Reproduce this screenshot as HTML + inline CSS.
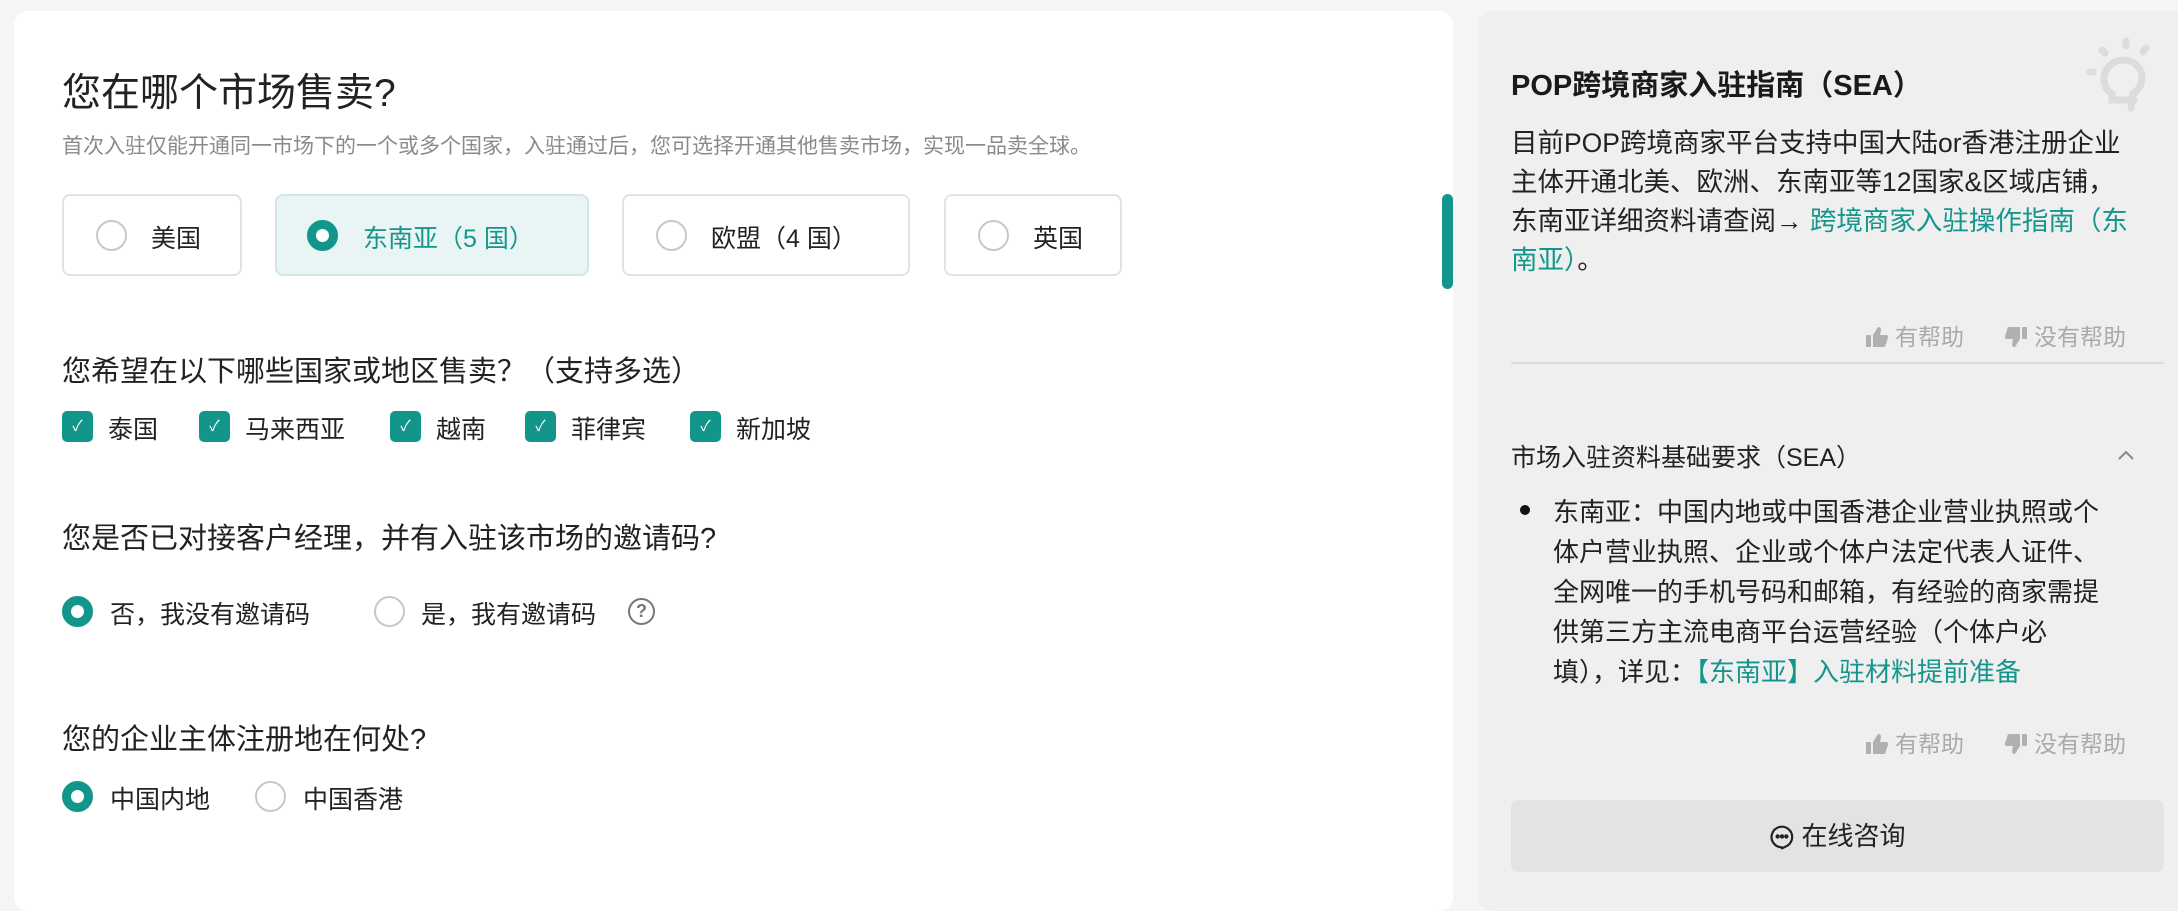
<!DOCTYPE html>
<html><head><meta charset="utf-8"><style>
*{margin:0;padding:0;box-sizing:border-box}
body{width:2178px;height:882px;background:#f5f5f5;font-family:"Liberation Sans","Noto Sans CJK SC",sans-serif;color:#222;position:relative;overflow:hidden}
.a{position:absolute;white-space:nowrap}
.card{position:absolute;left:14px;top:11px;width:1439px;height:900px;background:#fff;border-radius:14px}
.side{position:absolute;left:1478px;top:11px;width:720px;height:900px;background:#efefef;border-radius:14px}
.opt{position:absolute;top:194px;height:82px;border:2px solid #e3e3e3;border-radius:8px;background:#fff}
.opt.sel{background:#e9f5f4;border-color:#cfe6e3}
.r{position:absolute;width:31px;height:31px;border-radius:50%;border:2px solid #c8c8c8;background:#fff}
.r.on{border:9px solid #12968b}
.cb{position:absolute;width:31px;height:31px;border-radius:5px;background:#12968b;color:#fff;font-size:15px;text-align:center;line-height:31px}
.t25{font-size:25px}
.q{font-size:29px}
.g{color:#aaa;font-size:23px}
.g svg{vertical-align:-4px;margin-right:6px}
.teal{color:#14968c}
</style></head><body>
<div class="card"></div>
<div class="side"></div>

<div class="a" style="left:62px;top:62px;font-size:39px">您在哪个市场售卖?</div>
<div class="a" style="left:62px;top:130px;font-size:21px;color:#8a8a8a">首次入驻仅能开通同一市场下的一个或多个国家，入驻通过后，您可选择开通其他售卖市场，实现一品卖全球。</div>

<div class="opt" style="left:62px;width:180px"></div>
<div class="r" style="left:96px;top:220px"></div><div class="a t25" style="left:151px;top:219px">美国</div>
<div class="opt sel" style="left:275px;width:314px"></div>
<div class="r on" style="left:307px;top:220px"></div><div class="a t25 teal" style="left:363px;top:219px">东南亚（5 国）</div>
<div class="opt" style="left:622px;width:288px"></div>
<div class="r" style="left:656px;top:220px"></div><div class="a t25" style="left:711px;top:219px">欧盟（4 国）</div>
<div class="opt" style="left:944px;width:178px"></div>
<div class="r" style="left:978px;top:220px"></div><div class="a t25" style="left:1033px;top:219px">英国</div>

<div class="a" style="left:1442px;top:194px;width:11px;height:95px;background:#12968b;border-radius:6px"></div>

<div class="a q" style="left:62px;top:348px">您希望在以下哪些国家或地区售卖？（支持多选）</div>
<div class="cb" style="left:62px;top:411px">✓</div><div class="a t25" style="left:108px;top:410px">泰国</div>
<div class="cb" style="left:199px;top:411px">✓</div><div class="a t25" style="left:245px;top:410px">马来西亚</div>
<div class="cb" style="left:390px;top:411px">✓</div><div class="a t25" style="left:436px;top:410px">越南</div>
<div class="cb" style="left:525px;top:411px">✓</div><div class="a t25" style="left:571px;top:410px">菲律宾</div>
<div class="cb" style="left:690px;top:411px">✓</div><div class="a t25" style="left:736px;top:410px">新加坡</div>

<div class="a q" style="left:62px;top:515px">您是否已对接客户经理，并有入驻该市场的邀请码?</div>
<div class="r on" style="left:62px;top:596px"></div><div class="a t25" style="left:110px;top:595px">否，我没有邀请码</div>
<div class="r" style="left:374px;top:596px"></div><div class="a t25" style="left:421px;top:595px">是，我有邀请码</div>
<div class="a" style="left:628px;top:598px;width:27px;height:27px;border:2px solid #777;border-radius:50%;color:#777;font-size:18px;text-align:center;line-height:23px;font-weight:bold">?</div>

<div class="a q" style="left:62px;top:716px">您的企业主体注册地在何处?</div>
<div class="r on" style="left:62px;top:781px"></div><div class="a t25" style="left:110px;top:780px">中国内地</div>
<div class="r" style="left:255px;top:781px"></div><div class="a t25" style="left:303px;top:780px">中国香港</div>

<!-- side -->
<svg class="a" style="left:2082px;top:36px" width="76" height="80" viewBox="0 0 76 80" fill="none" stroke="#dcdcdc" stroke-width="7" stroke-linecap="round">
<path d="M44 5v5M64 12l-3 4M8 36h3M20 14l3 3"/>
<path d="M42 24c-12 0-20 9-20 19 0 7 4 12 8 15v6h22"/>
<path d="M42 24c10 0 18 8 18 18 0 8-5 13-9 16l-2 14"/>
</svg>
<div class="a" style="left:1511px;top:62px;font-size:29px;font-weight:bold;color:#1a1a1a">POP跨境商家入驻指南（SEA）</div>
<div class="a" style="left:1511px;top:124px;font-size:26.5px;line-height:39px;color:#222">目前POP跨境商家平台支持中国大陆or香港注册企业<br>主体开通北美、欧洲、东南亚等12国家&amp;区域店铺，<br>东南亚详细资料请查阅→ <span class="teal">跨境商家入驻操作指南（东</span><br><span class="teal">南亚）</span>。</div>

<div class="a g" style="left:1865px;top:318px"><svg width="24" height="24" viewBox="0 0 24 24" fill="#b0b0b0"><rect x="1" y="10" width="5" height="12" rx="1"/><path d="M8 10l5-8c2 0 3 1 3 3l-1 5h6c1.5 0 2.5 1 2 2.5l-2.5 8c-.3 1-1 1.5-2 1.5H8z"/></svg>有帮助</div>
<div class="a g" style="left:2004px;top:318px"><svg width="24" height="24" viewBox="0 0 24 24" fill="#b0b0b0" style="transform:scaleY(-1)"><rect x="18" y="10" width="5" height="12" rx="1"/><path d="M16 10l-5-8c-2 0-3 1-3 3l1 5H3c-1.5 0-2.5 1-2 2.5l2.5 8c.3 1 1 1.5 2 1.5H16z"/></svg>没有帮助</div>

<div class="a" style="left:1511px;top:362px;width:653px;height:2px;background:#dcdcdc"></div>
<div class="a" style="left:1511px;top:438px;font-size:25px">市场入驻资料基础要求（SEA）</div>
<svg class="a" style="left:2116px;top:448px" width="20" height="14" viewBox="0 0 20 14" fill="none" stroke="#888" stroke-width="2"><path d="M3 11l7-7 7 7"/></svg>
<div class="a" style="left:1520px;top:505px;width:10px;height:10px;border-radius:50%;background:#111"></div>
<div class="a" style="left:1553px;top:492px;font-size:26px;line-height:40px">东南亚：中国内地或中国香港企业营业执照或个<br>体户营业执照、企业或个体户法定代表人证件、<br>全网唯一的手机号码和邮箱，有经验的商家需提<br>供第三方主流电商平台运营经验（个体户必<br>填），详见：<span class="teal">【东南亚】入驻材料提前准备</span></div>

<div class="a g" style="left:1865px;top:725px"><svg width="24" height="24" viewBox="0 0 24 24" fill="#b0b0b0"><rect x="1" y="10" width="5" height="12" rx="1"/><path d="M8 10l5-8c2 0 3 1 3 3l-1 5h6c1.5 0 2.5 1 2 2.5l-2.5 8c-.3 1-1 1.5-2 1.5H8z"/></svg>有帮助</div>
<div class="a g" style="left:2004px;top:725px"><svg width="24" height="24" viewBox="0 0 24 24" fill="#b0b0b0" style="transform:scaleY(-1)"><rect x="18" y="10" width="5" height="12" rx="1"/><path d="M16 10l-5-8c-2 0-3 1-3 3l1 5H3c-1.5 0-2.5 1-2 2.5l2.5 8c.3 1 1 1.5 2 1.5H16z"/></svg>没有帮助</div>

<div class="a" style="left:1511px;top:800px;width:653px;height:72px;background:#e3e3e3;border-radius:8px;text-align:center;line-height:72px;font-size:26px">
<svg width="26" height="26" viewBox="0 0 24 24" style="vertical-align:-5px;margin-right:6px" fill="none" stroke="#222" stroke-width="2"><path d="M12 21.5A9.5 9.5 0 1 1 17 20l-5 2.5z" stroke-linejoin="round"/><circle cx="8" cy="11.5" r="1" fill="#222"/><circle cx="12" cy="11.5" r="1" fill="#222"/><circle cx="16" cy="11.5" r="1" fill="#222"/></svg>在线咨询</div>
</body></html>
